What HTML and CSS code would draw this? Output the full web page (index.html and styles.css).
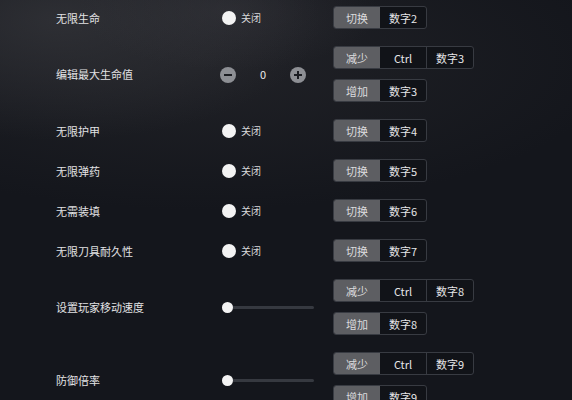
FILE: index.html
```html
<!DOCTYPE html>
<html lang="zh-CN">
<head>
    <meta charset="UTF-8">
    <title>修改器</title>
    <link rel="stylesheet" href="styles.css">
</head>
<body>
    <div class="list">
        <div class="row">
            <div class="label">无限生命</div>
            <div class="control"><span class="toggle"></span><span class="state">关闭</span></div>
            <div class="keys">
                <div class="group"><span class="act">切换</span><span>数字2</span></div>
            </div>
        </div>

        <div class="row">
            <div class="label">编辑最大生命值</div>
            <div class="control">
                <span class="step">
                    <svg viewBox="0 0 16 16" width="16" height="16"><circle cx="8" cy="8" r="8" fill="#8d8f94"/><rect x="4" y="7" width="8" height="2" fill="#1a1c21"/></svg>
                </span>
                <span class="value">0</span>
                <span class="step">
                    <svg viewBox="0 0 16 16" width="16" height="16"><circle cx="8" cy="8" r="8" fill="#8d8f94"/><rect x="4" y="7" width="8" height="2" fill="#1a1c21"/><rect x="7" y="4" width="2" height="8" fill="#1a1c21"/></svg>
                </span>
            </div>
            <div class="keys">
                <div class="group"><span class="act">减少</span><span>Ctrl</span><span>数字3</span></div>
                <div class="group"><span class="act">增加</span><span>数字3</span></div>
            </div>
        </div>

        <div class="row">
            <div class="label">无限护甲</div>
            <div class="control"><span class="toggle"></span><span class="state">关闭</span></div>
            <div class="keys">
                <div class="group"><span class="act">切换</span><span>数字4</span></div>
            </div>
        </div>

        <div class="row">
            <div class="label">无限弹药</div>
            <div class="control"><span class="toggle"></span><span class="state">关闭</span></div>
            <div class="keys">
                <div class="group"><span class="act">切换</span><span>数字5</span></div>
            </div>
        </div>

        <div class="row">
            <div class="label">无需装填</div>
            <div class="control"><span class="toggle"></span><span class="state">关闭</span></div>
            <div class="keys">
                <div class="group"><span class="act">切换</span><span>数字6</span></div>
            </div>
        </div>

        <div class="row">
            <div class="label">无限刀具耐久性</div>
            <div class="control"><span class="toggle"></span><span class="state">关闭</span></div>
            <div class="keys">
                <div class="group"><span class="act">切换</span><span>数字7</span></div>
            </div>
        </div>

        <div class="row">
            <div class="label">设置玩家移动速度</div>
            <div class="control"><div class="slider"><span class="thumb"></span></div></div>
            <div class="keys">
                <div class="group"><span class="act">减少</span><span>Ctrl</span><span>数字8</span></div>
                <div class="group"><span class="act">增加</span><span>数字8</span></div>
            </div>
        </div>

        <div class="row">
            <div class="label">防御倍率</div>
            <div class="control"><div class="slider"><span class="thumb"></span></div></div>
            <div class="keys">
                <div class="group"><span class="act">减少</span><span>Ctrl</span><span>数字9</span></div>
                <div class="group"><span class="act">增加</span><span>数字9</span></div>
            </div>
        </div>
    </div>
</body>
</html>
```

FILE: styles.css
```css
body {
    margin: 0;
    height: 400px;
    overflow: hidden;
    background:
        radial-gradient(ellipse 150px 60px at 230px 10px, rgba(60, 60, 66, 0.4), transparent),
        radial-gradient(ellipse 260px 120px at 60px 20px, rgba(52, 53, 58, 0.75), transparent),
        radial-gradient(ellipse 420px 150px at 200px 60px, rgba(34, 35, 40, 0.9), transparent),
        #14161c;
    font-family: "Noto Sans CJK SC", "Noto Sans", sans-serif;
    color: #e4e4e6;
}

.list {
    display: flex;
    flex-direction: column;
    gap: 17px;
    padding: 6px 0 0 56px;
}

.row {
    display: grid;
    grid-template-columns: 164px 113px auto;
    align-items: center;
}

.label {
    font-size: 11px;
    color: #e2e2e4;
}

.control {
    display: flex;
    align-items: center;
}

.toggle {
    width: 14px;
    height: 14px;
    margin-left: 2px;
    border-radius: 50%;
    background: #f3f3f3;
}

.state {
    margin-left: 5px;
    font-size: 10px;
    color: #d8d8da;
}

.step {
    display: flex;
    margin-top: 2px;
}

.value {
    width: 54px;
    text-align: center;
    font-size: 11px;
    color: #eaeaea;
}

.slider {
    position: relative;
    width: 92px;
    height: 3px;
    margin-left: 2px;
    background: #363940;
    border-radius: 2px;
}

.thumb {
    position: absolute;
    left: 0;
    top: -4px;
    width: 11px;
    height: 11px;
    border-radius: 50%;
    background: #f4f4f4;
}

.keys {
    display: flex;
    flex-direction: column;
    align-items: flex-start;
    gap: 10px;
}

.group {
    display: flex;
    height: 21px;
    border: 1px solid #383b42;
    border-radius: 3px;
    overflow: hidden;
    background: #111318;
}

.group span {
    width: 46px;
    display: flex;
    align-items: center;
    justify-content: center;
    font-size: 11px;
    color: #e6e6e8;
}

.group span + span {
    border-left: 1px solid #383b42;
}

.group .act {
    background: #5d5e62;
    color: #dcdcde;
}

.group .act + span {
    border-left: none;
}
```
